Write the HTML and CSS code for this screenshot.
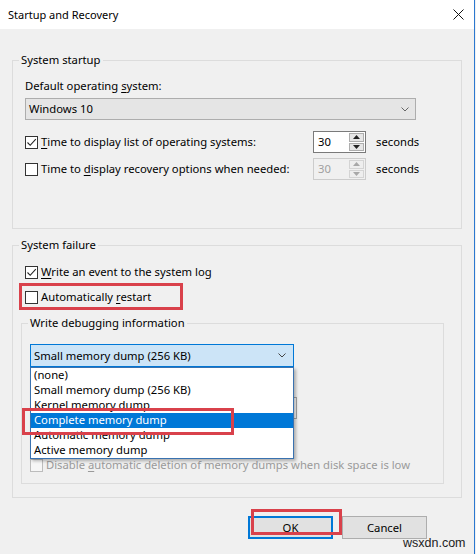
FILE: index.html
```html
<!DOCTYPE html>
<html lang="en">
<head>
<meta charset="utf-8">
<title>Startup and Recovery</title>
<link rel="stylesheet" href="styles.css">
</head>
<body>
<div class="window">
  <div class="titlebar">
    <span class="title">Startup and Recovery</span>
    <svg class="close" width="11" height="11" viewBox="0 0 11 11"><path d="M0.5 0.5 L10.5 10.5 M10.5 0.5 L0.5 10.5" stroke="#111" stroke-width="1" fill="none"/></svg>
  </div>
  <div class="content">
    <fieldset class="group g1">
      <legend>System startup</legend>
      <div class="label">Default operating <u>s</u>ystem:</div>
      <div class="select">
        <span>Windows 10</span>
        <svg class="chev" width="8" height="5" viewBox="0 0 8 5"><path d="M0.5 0.5 L4 4 L7.5 0.5" stroke="#666" fill="none"/></svg>
      </div>
      <div class="srow first">
        <span class="cb checked"><svg width="11" height="11" viewBox="0 0 11 11"><path d="M1.5 5.5 L4.2 8.3 L9.8 2.2" stroke="#222" stroke-width="1.1" fill="none"/></svg></span>
        <span class="slabel"><u>T</u>ime to display list of operating systems:</span>
        <div class="spin">
          <span class="val">30</span>
          <div class="arrows">
            <span class="ab"><svg width="7" height="4" viewBox="0 0 7 4"><path d="M0 4 L3.5 0 L7 4 Z" fill="#222"/></svg></span>
            <span class="ab"><svg width="7" height="4" viewBox="0 0 7 4"><path d="M0 0 L3.5 4 L7 0 Z" fill="#222"/></svg></span>
          </div>
        </div>
        <span class="unit">seconds</span>
      </div>
      <div class="srow second">
        <span class="cb"></span>
        <span class="slabel">Time to <u>d</u>isplay recovery options when needed:</span>
        <div class="spin disabled">
          <span class="val">30</span>
          <div class="arrows">
            <span class="ab"><svg width="7" height="4" viewBox="0 0 7 4"><path d="M0 4 L3.5 0 L7 4 Z" fill="#a8a8a8"/></svg></span>
            <span class="ab"><svg width="7" height="4" viewBox="0 0 7 4"><path d="M0 0 L3.5 4 L7 0 Z" fill="#a8a8a8"/></svg></span>
          </div>
        </div>
        <span class="unit">seconds</span>
      </div>
    </fieldset>

    <fieldset class="group g2">
      <legend>System failure</legend>
      <div class="crow">
        <span class="cb checked"><svg width="11" height="11" viewBox="0 0 11 11"><path d="M1.5 5.5 L4.2 8.3 L9.8 2.2" stroke="#222" stroke-width="1.1" fill="none"/></svg></span>
        <span><u>W</u>rite an event to the system log</span>
      </div>
      <div class="crow restart">
        <span class="cb"></span>
        <span>Automatically <u>r</u>estart</span>
      </div>
      <fieldset class="group g3">
        <legend>Write debugging information</legend>
        <div class="combo">
          <span>Small memory dump (256 KB)</span>
          <svg class="chev" width="8" height="5" viewBox="0 0 8 5"><path d="M0.5 0.5 L4 4 L7.5 0.5" stroke="#444" fill="none"/></svg>
        </div>
        <div class="textbox"></div>
        <div class="crow disabled">
          <span class="cb dis"></span>
          <span class="dtext">Disable <u>a</u>utomatic deletion of memory dumps when disk space is low</span>
        </div>
      </fieldset>
    </fieldset>

    <div class="buttons">
      <div class="btn default">OK</div>
      <div class="btn">Cancel</div>
    </div>
  </div>

  <ul class="droplist">
    <li><span>(none)</span></li>
    <li><span>Small memory dump (256 KB)</span></li>
    <li><span>Kernel memory dump</span></li>
    <li class="sel"><span>Complete memory dump</span></li>
    <li><span>Automatic memory dump</span></li>
    <li><span>Active memory dump</span></li>
  </ul>

  <div class="mark mark-restart"></div>
  <div class="mark mark-complete"></div>
  <div class="mark mark-ok"></div>

  <div class="watermark">wsxdn.com</div>
</div>
</body>
</html>
```

FILE: styles.css
```css
* { box-sizing: border-box; }
html, body { margin: 0; padding: 0; }
body {
  width: 476px;
  height: 554px;
  overflow: hidden;
  background: #f0f0f0;
  font-family: "Noto Sans", "Open Sans", sans-serif;
  font-size: 11.25px;
  line-height: 16px;
  color: #000;
}
u { text-decoration: underline; text-underline-offset: 2px; }

.window {
  position: relative;
  width: 475px;
  height: 554px;
  background: #f0f0f0;
  border-right: 1px solid #2b78d0;
}

.titlebar {
  height: 29px;
  background: #fff;
  display: flex;
  align-items: center;
  justify-content: space-between;
  padding: 0 10px 0 8px;
}
.title { font-size: 11px; }
.close { display: block; }

.content { padding: 23px 0 0 12px; }

.group {
  margin: 0;
  width: 450px;
  border: 1px solid #dcdcdc;
  min-width: 0;
}
.group legend {
  padding: 0 2px;
  height: 16px;
  line-height: 16px;
}
.g1 { padding: 10px 12px 48px 12px; }
.g1 legend, .g2 legend { margin-left: -6px; }

.label { height: 16px; }

.select {
  margin-top: 4px;
  width: 391px;
  height: 22px;
  background: #e5e5e5;
  border: 1px solid #adadad;
  display: flex;
  align-items: center;
  justify-content: space-between;
  padding: 0 6px 0 3px;
}
.chev { display: block; }

.srow {
  display: flex;
  align-items: center;
  height: 22px;
}
.srow.first { margin-top: 11px; }
.srow.second { margin-top: 5px; }

.cb {
  flex: none;
  width: 13px;
  height: 13px;
  border: 1px solid #333;
  background: #fff;
  display: flex;
  align-items: center;
  justify-content: center;
}
.cb svg { display: block; }
.cb.dis { border-color: #bcbcbc; background: #f6f6f6; }

.slabel { width: 272px; margin-left: 3px; white-space: nowrap; }

.spin {
  width: 53px;
  height: 22px;
  border: 1px solid #7a7a7a;
  background: #fff;
  display: flex;
  align-items: stretch;
}
.spin .val { flex: 1; padding-left: 4px; line-height: 20px; }
.spin .arrows {
  width: 16px;
  display: flex;
  flex-direction: column;
  gap: 1px;
  padding: 1px 1px 1px 0;
}
.spin .ab {
  flex: 1;
  background: #e6e6e6;
  border: 1px solid #adadad;
  display: flex;
  align-items: center;
  justify-content: center;
}
.spin .ab svg { display: block; }
.spin.disabled { border-color: #cccccc; background: #f0f0f0; color: #a0a0a0; }
.spin.disabled .ab { border-color: #d4d4d4; background: #eeeeee; }
.unit { margin-left: 10px; }

.g2 { margin-top: 8px; padding: 11px 12px 13px 12px; }

.crow {
  display: flex;
  align-items: center;
  gap: 3px;
  height: 16px;
  white-space: nowrap;
}
.crow.restart { margin-top: 9px; }

.g3 {
  margin: 10px 0 0 -4px;
  width: 423px;
  padding: 13px 8px 10px 8px;
}
.g3 legend { margin-left: -2px; }

.combo {
  width: 264px;
  height: 23px;
  background: #cce4f7;
  border: 1px solid #0078d7;
  display: flex;
  align-items: center;
  justify-content: space-between;
  padding: 0 7px 0 3px;
}

.textbox {
  margin-top: 30px;
  width: 267px;
  height: 22px;
  border: 1px solid #a5a5a5;
  background: #f7f7f7;
}

.crow.disabled { margin-top: 38px; color: #9a9a9a; }
.dtext { line-height: 12px; }

.buttons {
  margin-top: 18px;
  display: flex;
  justify-content: flex-end;
  gap: 9px;
  padding-right: 47px;
}
.btn {
  width: 85px;
  height: 23px;
  background: #e1e1e1;
  border: 1px solid #adadad;
  display: flex;
  align-items: center;
  justify-content: center;
}
.btn.default { border: 2px solid #0078d7; }

.droplist {
  position: absolute;
  left: 30px;
  top: 367px;
  width: 264px;
  height: 92px;
  margin: 0;
  padding: 0;
  list-style: none;
  background: #fff;
  border: 1px solid #3a72b0;
  box-shadow: 2px 2px 3px rgba(0, 0, 0, 0.28);
}
.droplist li {
  height: 15px;
  padding: 0 0 0 3px;
  white-space: nowrap;
}
.droplist li span { display: block; line-height: 14px; }
.droplist li.sel { background: #0078d7; color: #fff; }

.mark {
  position: absolute;
  border: 3px solid #d9414b;
}
.mark-restart { left: 19px; top: 283px; width: 164px; height: 27px; }
.mark-complete { left: 22px; top: 408px; width: 212px; height: 27px; }
.mark-ok { left: 251px; top: 509px; width: 91px; height: 26px; }

.watermark {
  position: absolute;
  left: 403px;
  top: 535px;
  font-family: "Liberation Sans", Arial, sans-serif;
  font-size: 12.5px;
  line-height: 16px;
  color: #222;
}
```
